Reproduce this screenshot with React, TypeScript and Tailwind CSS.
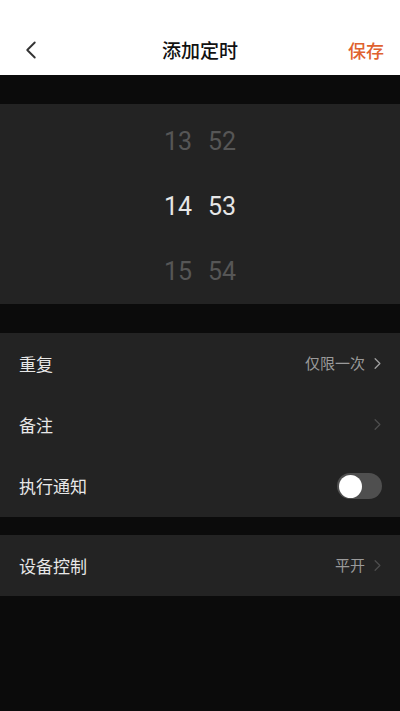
import { ChevronLeft, ChevronRight } from 'lucide-react'

const font = { fontFamily: '"Noto Sans CJK SC", "Noto Sans", sans-serif' }

function Row({ label, value, dim }: { label: string; value?: string; dim?: boolean }) {
  return (
    <div className="flex h-[61px] items-center justify-between pl-[19px] pr-[13px]">
      <span className="text-[17px] text-[#e8e8e8]">{label}</span>
      <div className="flex items-center gap-[3px]">
        {value && <span className="text-[15px] text-[#9a9a9a]">{value}</span>}
        <ChevronRight
          size={19}
          strokeWidth={1.6}
          className={dim ? 'text-[#4d4d4d]' : 'text-[#a0a0a0]'}
        />
      </div>
    </div>
  )
}

export default function App() {
  const hours = ['13', '14', '15']
  const mins = ['52', '53', '54']

  return (
    <main className="flex h-[711px] w-[400px] flex-col bg-[#0b0b0b]" style={font}>
      <header className="grid h-[75px] grid-cols-[1fr_auto_1fr] items-end bg-white px-[16px] pb-[9px]">
        <ChevronLeft size={30} strokeWidth={1.5} className="mb-[1px] text-[#333]" />
        <h1 className="text-[19px] font-medium leading-[32px] text-[#111]">添加定时</h1>
        <button className="justify-self-end text-[18px] font-medium leading-[32px] text-[#e0622f]">
          保存
        </button>
      </header>

      <section className="mt-[29px] flex h-[200px] flex-col justify-center bg-[#232323] pt-[5px]">
        {hours.map((h, i) => (
          <div
            key={h}
            className={
              'flex h-[66px] items-center justify-center gap-[14px] text-[25px] ' +
              (i === 1 ? 'text-[#e6e6e6]' : 'text-[#565656]')
            }
            style={{ fontFamily: 'Roboto, sans-serif' }}
          >
            <span className="w-[30px] text-center">{h}</span>
            <span className="w-[30px] text-center">{mins[i]}</span>
          </div>
        ))}
      </section>

      <section className="mt-[29px] flex flex-col bg-[#232323]">
        <Row label="重复" value="仅限一次" />
        <Row label="备注" dim />
        <div className="flex h-[62px] items-center justify-between pl-[19px] pr-[18px]">
          <span className="text-[17px] text-[#e8e8e8]">执行通知</span>
          <div className="flex h-[26px] w-[45px] items-center rounded-full bg-[#4f4f4f] px-[1.5px]">
            <div className="h-[23px] w-[23px] rounded-full bg-white" />
          </div>
        </div>
      </section>

      <section className="mt-[18px] bg-[#232323]">
        <Row label="设备控制" value="平开" dim />
      </section>
    </main>
  )
}
